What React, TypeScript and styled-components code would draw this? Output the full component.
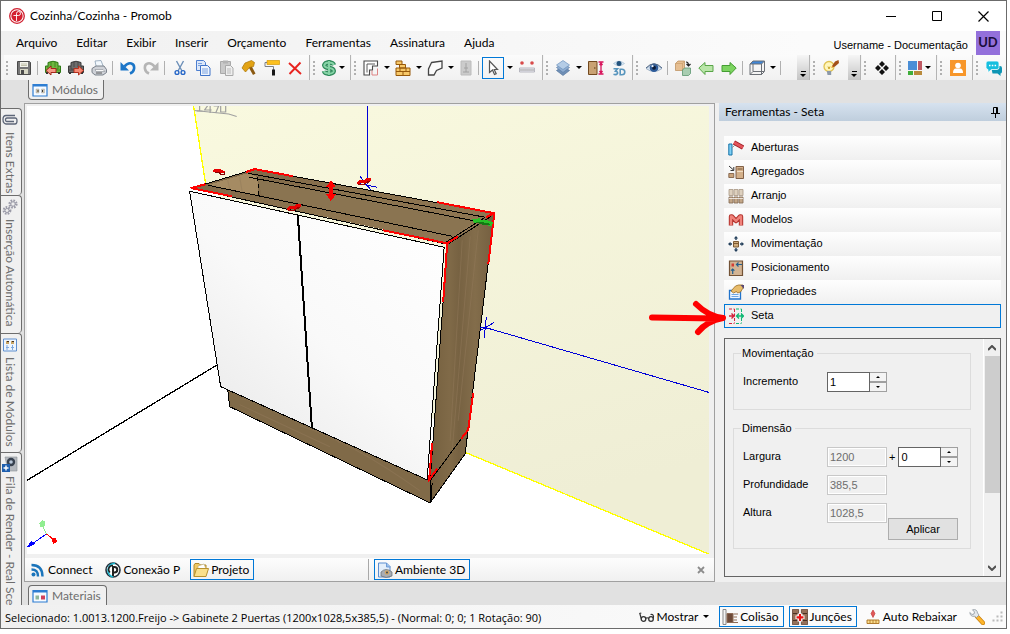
import React from "react";
import styled, { createGlobalStyle, css } from "styled-components";

const Global = createGlobalStyle`
  *, *::before, *::after { box-sizing: border-box; }
  body { margin: 0; background: #fff; }
  button, input { font: inherit; color: inherit; }
`;

const ui = `"Segoe UI", Lato, "Open Sans", sans-serif`;
const sans = `"Liberation Sans", Arial, sans-serif`;

/* ---------- icons ---------- */

const Icon = styled.svg.attrs({ viewBox: "0 0 16 16", "aria-hidden": true })`
  width: 16px;
  height: 16px;
  flex: none;
  display: block;
`;

const sofa = (body: string, dark: string, arrow: React.ReactNode) => (
  <>
    <path d="M3 2.5Q8 0 13 2.500V6h2.500v6.500H.5V6H3Z" fill={body} stroke={dark} />
    <path d="M3 6v3h10V6M6 2v5M10 2v5M.5 10h15" stroke={dark} fill="none" strokeWidth=".7" />
    <path d="M2 12v2M14 12v2" stroke="#333" strokeWidth="2" />
    {arrow}
  </>
);

const icons: Record<string, React.ReactNode> = {
  save: (
    <>
      <path d="M1.500 1.500h12l1 1v12h-13Z" fill="#767676" stroke="#4a4a4a" />
      <path d="M4 2h8v5H4Z" fill="#f4f4ec" />
      <path d="M5 4h6M5 5.500h6" stroke="#b4b49a" strokeWidth=".8" />
      <path d="M4 9h8v5H4Z" fill="#d6d6c4" />
      <path d="M5 10h3v4H5Z" fill="#4a4a4a" />
    </>
  ),
  sofaIn: sofa("#6fb73f", "#2f7a17", <path d="m1 10.500 5-4.500v2.500h5v4H6V15Z" fill="#f39a88" stroke="#a5271b" />),
  sofaOut: sofa("#6d6d6d", "#3b3b3b", <path d="m15.500 10.500-5-4.500v2.500H6v4h4.500V15Z" fill="#f58a74" stroke="#b3301f" />),
  printer: (
    <>
      <path d="m4 1 6-.5 2.500 6.500-7 1Z" fill="#f2f8fd" stroke="#8aa0b4" strokeWidth=".8" />
      <path d="M1 8.500 5 6h8l2.500 3.500v3L12 15H4l-3-2.500Z" fill="#cfd2d8" stroke="#6e7680" strokeWidth=".9" />
      <path d="M4 9.500h8l2 2H5Z" fill="#f9f9f9" stroke="#8a8f96" strokeWidth=".6" />
      <path d="M5 13h6" stroke="#5b5b5b" />
    </>
  ),
  undo: (
    <>
      <path d="M4.500 6.500C9 1 15 3 14 9q-.5 3-4 4.500" fill="none" stroke="#1c76c8" strokeWidth="2.600" />
      <path d="M.5 2v8.500H9Z" fill="#1c76c8" />
    </>
  ),
  redo: (
    <>
      <path d="M11.500 6.500C7 1 1 3 2 9q.5 3 4 4.500" fill="none" stroke="#b5b5b5" strokeWidth="2.600" />
      <path d="M15.500 2v8.500H7Z" fill="#b5b5b5" />
    </>
  ),
  cut: (
    <>
      <path d="m4.500 1 5.500 10M11.500 1 6 11" stroke="#6c8fb8" strokeWidth="1.400" fill="none" />
      <circle cx="5" cy="12.500" r="1.900" fill="none" stroke="#2767c8" strokeWidth="1.400" />
      <circle cx="11" cy="12.500" r="1.900" fill="none" stroke="#2767c8" strokeWidth="1.400" />
    </>
  ),
  copy: (
    <>
      <path d="M1.500.5h7l2 2v8h-9Z" fill="#dce8fa" stroke="#4d7fd0" />
      <path d="M5.500 5.500h7l2.500 2.500v7.500H5.500Z" fill="#eef4fd" stroke="#3f73c8" />
      <path d="M3 3.500h4M3 5.500h2M7 9h6M7 11h6M7 13h6" stroke="#7ba2e0" />
    </>
  ),
  paste: (
    <>
      <path d="M2.500 1.500h10v12h-10Z" fill="#c9c9c9" stroke="#a9a9a9" />
      <path d="M5 .5h5v3H5Z" fill="#b3b3b3" />
      <path d="M7.500 5.500h5l2.500 2.500v7.500H7.500Z" fill="#eee" stroke="#a9a9a9" />
      <path d="M9 9h4M9 11h4M9 13h4" stroke="#bbb" />
    </>
  ),
  hammer: (
    <>
      <path d="m7.500 7 4.500 8 2.500-1.500L10.500 6Z" fill="#8b5a12" />
      <path d="m1 8 3-5 6.500-2.500 3 2-1 4-4 1-4 4.500Z" fill="#e2a315" stroke="#a87208" strokeWidth=".7" />
    </>
  ),
  roller: (
    <>
      <path d="M3 .5h12.500v4H3Z" fill="#fcc01e" stroke="#d69a06" strokeWidth=".7" />
      <path d="M3 2.500H1v4h8.500V10" fill="none" stroke="#7c8086" />
      <path d="M8 9.500h3v6H8Z" fill="#181818" />
    </>
  ),
  del: <path d="m2 3 12 11M13.500 2.500 2.500 14" stroke="#e8231f" strokeWidth="1.900" fill="none" />,
  dollar: (
    <>
      <path d="M8 0v16" stroke="#2f8a5b" strokeWidth="3" />
      <path d="M13 5Q12 2.500 8 2.500T3.200 5.200Q3.500 7.500 8 8t4.800 3Q12.500 13.500 8 13.500T3 11" fill="none" stroke="#2f8a5b" strokeWidth="4.400" />
      <path d="M13 5Q12 2.500 8 2.500T3.200 5.200Q3.500 7.500 8 8t4.800 3Q12.500 13.500 8 13.500T3 11M8 1v14" fill="none" stroke="#86d3a6" strokeWidth="2" />
    </>
  ),
  plan: (
    <>
      <path d="M1 1h13.500v5H9.500v4H6.500v5H1Z" fill="#fff" stroke="#4a4a4a" strokeWidth="1.100" />
      <path d="M4 12.500V4h8" fill="none" stroke="#4a4a4a" strokeWidth=".9" />
      <path d="M9 15H14.500V8.500M9 10.500V15" fill="none" stroke="#dd8484" />
    </>
  ),
  bricks: (
    <>
      <path d="M1 1h6v3.500H1ZM4.500 4.500h6V8h-6ZM1 8h14v7.500H1Z" fill="#f7c868" stroke="#96580a" />
      <path d="M1 11.500h14M5 8v3.500M11 8v3.500M8 11.500V15" stroke="#96580a" />
    </>
  ),
  shape: <path d="M4.500 2.500 15 1v7l-5.500 2.500L7 15H1.500V9Z" fill="#fafafa" stroke="#454545" strokeWidth="1.300" />,
  cabinetOff: (
    <>
      <path d="M3 1h10v14H3Z" fill="#cbcbcb" stroke="#bcbcbc" />
      <path d="M8 3v9M6 8h4M5 12h6" stroke="#a2a2a2" />
    </>
  ),
  cursor: <path d="M4.500 1v11.500l3-2.500 2 4.500 1.700-.8-2-4.200h3.300Z" fill="#fff" stroke="#555" strokeWidth="1.200" />,
  measure: (
    <>
      <circle cx="3" cy="3" r="1.800" fill="#d84a4a" />
      <circle cx="13" cy="3" r="1.800" fill="#d84a4a" />
      <path d="M.5 8h15v4H.5Z" fill="#ececf2" stroke="#a9a9b4" strokeWidth=".8" />
      <path d="M2 9v2m2-2v2m2-2v2m2-2v2m2-2v2m2-2v2m2-2v2" stroke="#888" strokeWidth=".8" />
    </>
  ),
  layers: (
    <>
      <path d="m8 6 6.500 4.500L8 15.500 1.500 10.500Z" fill="#6f8fb5" stroke="#55779f" strokeWidth=".7" />
      <path d="m8 3 6.500 4.500L8 12.500 1.500 7.500Z" fill="#8eacd0" stroke="#5c80aa" strokeWidth=".7" />
      <path d="M8 .5 14.500 5 8 9.500 1.500 5Z" fill="#b4cce6" stroke="#6d92bd" strokeWidth=".7" />
    </>
  ),
  door: (
    <>
      <path d="M.5 1.500h8.500v13H.5Z" fill="#c9a273" stroke="#72491f" />
      <path d="M6 8h1.500" stroke="#5a3510" />
      <path d="M10.500 2h5M10.500 14h5M13 3v10M11.500 5 13 3l1.500 2M11.500 11l1.500 2 1.500-2" stroke="#d8145c" strokeWidth="1.300" fill="none" />
    </>
  ),
  eye3d: (
    <>
      <path d="M2.500 3.500Q8-1 13.500 3.500 8 8 2.500 3.500Z" fill="#dceaf5" stroke="#a4bdd2" strokeWidth=".7" />
      <circle cx="8" cy="3.500" r="2.500" fill="#23537d" />
      <path d="M2.500 8.800h4l-2 2.400q2.500.3 2 2.300-1.300 1.800-4 .8M9.200 9.200v5.600h1.600q3 0 3-2.800t-3-2.800Z" fill="none" stroke="#5795bd" strokeWidth="1.600" />
    </>
  ),
  eye: (
    <>
      <path d="M0 8.500Q8 1 16 8.500 8 14.500 0 8.500Z" fill="#d8e4f0" stroke="#8fa5bd" strokeWidth=".8" />
      <circle cx="8" cy="7.800" r="4.300" fill="#2e5c9a" />
      <circle cx="8" cy="7.800" r="2" fill="#0c1c38" />
      <circle cx="6.500" cy="6.200" r="1.100" fill="#eef6ff" />
      <path d="M0 8Q8-.5 16 8" fill="none" stroke="#4f6684" />
    </>
  ),
  boxes: (
    <>
      <path d="M.5 3.500 3 1h6.500v7L7.500 10.500h-7Z" fill="#e6bf92" stroke="#b98b57" strokeWidth=".7" />
      <path d="M.5 3.500h7v7M7.500 3.500 9.500 1" fill="none" stroke="#c99d6b" strokeWidth=".7" />
      <path d="M7.500 10 9.500 8h6v5.500l-2 2h-6Z" fill="#a8cdb1" stroke="#5c9670" strokeWidth=".8" />
      <path d="M11 2q2.500 0 2.500 3.500m-2-1.500 2 2 2-2" fill="none" stroke="#222" strokeWidth="1.200" />
    </>
  ),
  arrowL: <path d="M.8 8 7 2.500v3h8v6H7v3Z" fill="#b9e6a8" stroke="#59a548" />,
  arrowR: <path d="M15.200 8 9 2.500v3H1v6h8v3Z" fill="#7cd460" stroke="#459d33" />,
  cube: (
    <>
      <path d="m1 4 3-3h11.500l-3 3Z" fill="#3f86d8" />
      <path d="m1 4 3-3h11.500v10.500l-3 3H1ZM1 4h11.500V15M15.500 1l-3 3M4 4v7.500h11M4 11.500l-3 3" fill="none" stroke="#6c7076" />
    </>
  ),
  bulb: (
    <>
      <circle cx="6" cy="6.500" r="5" fill="#fff6bc" stroke="#e0c252" strokeWidth="1.300" />
      <path d="M5 6.500 6 9l1-2.500" fill="none" stroke="#c9a227" />
      <path d="M3.800 11h4.400v4H4.500Z" fill="#8d99a8" />
      <path d="m9 6 3-4.500L15.500 0l.5 3-4 3.500-3 1Z" fill="#a3501a" />
      <path d="m8 8 1-2 1.500 1Z" fill="#f4a22a" />
    </>
  ),
  diamonds: <path d="m8 1 3 3-3 3-3-3Zm0 8 3 3-3 3-3-3ZM4 5l3 3-3 3-3-3Zm8 0 3 3-3 3-3-3Z" fill="#111" />,
  blocks: (
    <>
      <path d="M1 1h9v9H1Z" fill="#4a8ed6" />
      <path d="M11 1h4v9h-4Z" fill="#bf5a64" />
      <path d="M1 11h5v4H1Z" fill="#3fae3a" />
      <path d="M7 11h8v4H7Z" fill="#b98a3c" />
    </>
  ),
  person: (
    <>
      <path d="M0 0h16v16H0Z" fill="#f7962a" />
      <circle cx="8" cy="5.500" r="2.800" fill="#fff" />
      <path d="M3 13q0-4.500 3-4.500h4q3 0 3 4.500Z" fill="#fff" />
    </>
  ),
  chat: (
    <>
      <path d="M5 6h9q2 0 2 2v3.500q0 2-1.500 2V16L11.500 13.500H6.500Z" fill="#0e95b4" />
      <path d="M2 1h9q2 0 2 2v4.500q0 2-2 2H5.500L2 12.500V9.500q-2 0-2-2V3q0-2 2-2Z" fill="#16bfdf" stroke="#fff" strokeWidth=".8" />
      <path d="M3 5.500h1.500m1.300 0h1.500m1.300 0h1.500" stroke="#fff" strokeWidth="1.500" />
    </>
  ),
  modules: (
    <>
      <path d="M1 2.500h14v11.500H1Z" fill="#f7fbff" stroke="#2d7dd2" strokeWidth="1.200" />
      <path d="M1 2h14v2.500H1Z" fill="#2d7dd2" />
      <path d="M4 7h3v4H4ZM9.500 7h3v4h-3Z" fill="#d9c9a8" stroke="#8ba0b8" strokeWidth=".4" />
      <path d="M6 8v2M10.500 8v2" stroke="#3b3b3b" />
    </>
  ),
  materials: (
    <>
      <path d="M1 2.500h14v11.500H1Z" fill="#f7fbff" stroke="#2d7dd2" strokeWidth="1.200" />
      <path d="M1 2h14v2.500H1Z" fill="#2d7dd2" />
      <path d="M3.500 7.500h3.500v4H3.500Z" fill="#8fb79b" />
      <path d="M9 7.500h4v4H9Z" fill="#d0405a" />
    </>
  ),
  clip: <path d="M13 3.500H4Q1 3.500 1 7.500T4 12h9q2 0 2-3t-2-3H5Q3.500 6 3.500 7.800T5 9.500h7" fill="none" stroke="#5d6678" strokeWidth="1.300" />,
  gears: (
    <>
      <circle cx="11" cy="5" r="3.200" fill="none" stroke="#9b9ba8" strokeWidth="2.800" strokeDasharray="1.500 1" />
      <circle cx="11" cy="5" r="2.200" fill="#eee" stroke="#9b9ba8" />
      <circle cx="5" cy="11.500" r="3" fill="none" stroke="#9b9ba8" strokeWidth="2.800" strokeDasharray="1.500 1" />
      <circle cx="5" cy="11.500" r="2" fill="#eee" stroke="#9b9ba8" />
    </>
  ),
  list: (
    <>
      <path d="M1.500 2h13v12h-13Z" fill="#eef5fd" stroke="#5f8fcf" />
      <path d="M4 4h3v3H4ZM9 4h3v3H9Z" fill="#c9a565" />
      <path d="M5 8v5M10.500 8v5M4 10.500h3M9 10.500h3" stroke="#7fa8de" />
      <path d="M5 4.500h2M10 4.500h2" stroke="#432" />
    </>
  ),
  queue: (
    <>
      <path d="M3 1h12v14H6Z" fill="#b4b8be" stroke="#8b9096" strokeWidth=".6" />
      <circle cx="9" cy="6" r="4.200" fill="#37414f" />
      <circle cx="9" cy="6" r="1.800" fill="#b9c8da" />
      <path d="M0 8h8v8H0Z" fill="#1f5fae" />
      <path d="M4 9.500v5M1.500 12h5" stroke="#fff" strokeWidth="1.400" />
    </>
  ),
  rss: (
    <>
      <circle cx="3.500" cy="12.500" r="2" fill="#1b75bb" />
      <path d="M1.500 7.500q6.500 0 6.500 7M1.500 3q11 0 11 11.500" fill="none" stroke="#1b75bb" strokeWidth="2.400" />
    </>
  ),
  conexao: (
    <>
      <circle cx="8" cy="8" r="7" fill="#fff" stroke="#26323e" strokeWidth="1.600" />
      <path d="M10 1.300A7 7 0 0 0 8 15" fill="none" stroke="#18b4cc" strokeWidth="1.800" />
      <path d="M8 14V5H9.500a2.700 2.700 0 0 1 0 5.500H8" fill="none" stroke="#222" strokeWidth="2" />
      <path d="M8 3.500A4 4 0 0 0 5 10.500" fill="none" stroke="#222" strokeWidth="1.500" />
    </>
  ),
  folder: (
    <>
      <path d="M1 14.500V3l1-1.500h4L7.500 3H13v3" fill="#f1c863" stroke="#b28a2d" />
      <path d="m5 4 6-2 2 5-8 1Z" fill="#fff" stroke="#b7a777" strokeWidth=".6" />
      <path d="m1 14.500 2.500-8H15.500l-2.500 8Z" fill="#fbe08b" stroke="#b8912f" />
    </>
  ),
  ambient: (
    <>
      <path d="M1.500 1h8l3.500 3.500V15h-11.500Z" fill="#e3eefa" stroke="#5c8ed0" />
      <path d="M9.500 1v4h4" fill="#9cc0ea" stroke="#5c8ed0" strokeWidth=".8" />
      <path d="M4 10q5-5 11 0v4q-6 3-11 0Z" fill="#a8adb5" stroke="#63686f" strokeWidth=".7" />
      <circle cx="10" cy="10.500" r="2.300" fill="#d3a864" />
      <circle cx="10" cy="10.500" r="1" fill="#3f4650" />
    </>
  ),
  glasses: (
    <>
      <circle cx="4.500" cy="10" r="2.300" fill="none" stroke="#333" strokeWidth="1.300" />
      <circle cx="12" cy="10" r="2.300" fill="none" stroke="#333" strokeWidth="1.300" />
      <path d="M6.800 9.500Q8 8 9.700 9.500M2.200 9.500.8 4.500l1.500-.5M14.200 9.500Q15.500 5 11.500 5.500" fill="none" stroke="#333" strokeWidth="1.200" />
    </>
  ),
  collision: (
    <>
      <path d="M1 .5h3v15H1Z" fill="#f4f4f4" stroke="#888" />
      <path d="M5 4.500h6v9H5Z" fill="#6d4a39" stroke="#8f6c56" />
      <path d="M11.500 5H16M11.500 8H15M11.500 11H15M8 13.500h8" stroke="#8f6c56" strokeWidth="1.200" />
    </>
  ),
  junction: (
    <>
      <path d="M.4.4h6.200v15.200H.4ZM9.400.4h6.200v15.200H9.400Z" fill="#957059" stroke="#5a3d2d" strokeWidth=".8" />
      <path d="M1 4.500h5M1 11.500h5M10 4.500h5M10 11.500h5" stroke="#4a3022" />
      <path d="M5.500 4.500h5v2h2v3.500h-2v2.500h-5V10h-2V6.500h2Z" fill="#fff" />
      <path d="M8 5v7M4.500 8.300h7" stroke="#e81313" strokeWidth="2.200" />
    </>
  ),
  lower: (
    <>
      <path d="m8 1 2 3.500-2 4-2-4Z" fill="#e05858" stroke="#bd2c2c" strokeWidth=".6" />
      <path d="M2 11h12v3.500H2Z" fill="#f9dc8c" stroke="#a9711e" strokeWidth=".9" />
      <path d="M5 11v3M8 11v3M11 11v3" stroke="#a9711e" strokeWidth=".8" />
    </>
  ),
  wrench: (
    <>
      <path d="m8 7.500 6 6.500" stroke="#c77f10" strokeWidth="4.400" strokeLinecap="round" />
      <path d="m8 7.500 6 6.500" stroke="#fdb52c" strokeWidth="3" strokeLinecap="round" />
      <path d="M.8 3.500 3 5.500l2-.5.500-2L3.500.8Q8-.3 8.500 4l1.500 2-2.500 2.500-2-1.200Q1.500 8 .8 3.500Z" fill="#e4e8ec" stroke="#8e979f" strokeWidth=".8" />
    </>
  ),
  openings: (
    <>
      <path d="M.8 4h3.200v11H.8Z" fill="#7fd0f5" stroke="#1472a8" />
      <path d="m6 2.500 9 5" stroke="#9f1c24" strokeWidth="4.400" />
      <path d="m6 2.500 9 5" stroke="#e2555b" strokeWidth="2.800" />
      <path d="m4 8 3-3" stroke="#999" />
    </>
  ),
  aggregate: (
    <>
      <path d="M1 2l4.500 4M5.800 3v3.500H2.500" fill="none" stroke="#333" />
      <path d="M.8 9.500h5v4h-5Z" fill="#c9a37b" stroke="#76543a" strokeWidth=".8" />
      <path d="M8 2.500h7.500v12H8Z" fill="#d3b08a" stroke="#76543a" strokeWidth=".9" />
      <path d="M9.500 5h5" stroke="#7b5a3d" />
      <path d="M9 7.500h6" stroke="#f0ddc4" />
    </>
  ),
  array: (
    <>
      <path d="M1 1.500h4v6H1ZM6 1.500h4v6H6ZM11 1.500h4v6h-4Z" fill="#ddd0be" stroke="#a89784" strokeWidth=".8" />
      <path d="M1 9h4v6H1ZM6 9h4v6H6ZM11 9h4v6h-4Z" fill="#c3a788" stroke="#806850" strokeWidth=".8" />
      <path d="M1 10.500h14" stroke="#fff" strokeWidth=".7" />
    </>
  ),
  models: (
    <>
      <path d="M3 13.500V4.500h1L8 9l4-4.500h1v9" fill="none" stroke="#b3322c" strokeWidth="4.400" strokeLinejoin="round" />
      <path d="M3 13V4.500h1L8 9l4-4.500h1V13" fill="none" stroke="#f0837b" strokeWidth="2.400" strokeLinejoin="round" />
    </>
  ),
  move: (
    <>
      <path d="M5.500 5.500h5v5.500h-5Z" fill="#d0ac7c" stroke="#7d5a33" />
      <path d="M5.500 7.500h5" stroke="#7d5a33" />
      <path d="m8 0 2.200 2.500H8.700V4H7.300V2.500H5.800ZM8 16l2.200-2.500H8.700V12H7.300v1.500H5.800ZM0 8l2.500-2.200v1.500H4v1.400H2.500v1.500ZM16 8l-2.500-2.200v1.500H12v1.400h1.500v1.500Z" fill="#24405c" />
    </>
  ),
  position: (
    <>
      <path d="M1.500 1h13v14.500h-13Z" fill="#d2b494" stroke="#725236" strokeWidth="1.200" />
      <path d="M3.500 3.500h2.500v3H3.500Z" fill="#d43e34" />
      <path d="M14 4.500H8.500M10.500 2.500l-2 2 2 2M4.700 14V9M3 10.700 4.700 9l1.700 1.700" fill="none" stroke="#23608e" strokeWidth="1.200" />
    </>
  ),
  properties: (
    <>
      <path d="M1.500 6.500h11v8.500h-11Z" fill="#eef6ff" stroke="#2073cc" strokeWidth="1.300" />
      <path d="M3.500 10.500h7M3.500 12.500h7" stroke="#6ea7e4" />
      <path d="M3 7 7.500 2l3-1H15v3l-2.500 4-3 1-1-1.500-3 1.500Z" fill="#e8bc6b" stroke="#9b6c22" strokeWidth=".8" />
      <path d="M12.500 1H16v4Z" fill="#5b4a76" />
    </>
  ),
  seta: (
    <>
      <path d="M1 1h5.500M6.500 1v14M1 15.500h5.500" fill="none" stroke="#d4233c" strokeDasharray="3 1.500" />
      <path d="M1 8h5M3.500 5.500 6 8l-2.500 2.500" fill="none" stroke="#d4233c" strokeWidth="1.400" />
      <path d="M8 1h5.500M13.500 1v14M8 15.500h5.500" fill="none" stroke="#10b873" strokeDasharray="3 1.500" />
      <path d="M8.500 8h7M11 5.500 8.500 8l2.500 2.500M13 5.500 15.500 8 13 10.500" fill="none" stroke="#10b873" strokeWidth="1.300" />
    </>
  ),
};

/* ---------- window frame ---------- */

const Desktop = styled.div`
  min-height: 100vh;
  padding: 0 3px 5px 0;
  display: flex;
`;

const Window = styled.div`
  flex: 1;
  min-width: 0;
  display: flex;
  flex-direction: column;
  border: 1px solid #6b6b6b;
  background: #e1e1e1;
  font: 12px/16px ${ui};
  color: #000;
`;

const TitleBar = styled.header`
  height: 30px;
  background: #fff;
  display: flex;
  align-items: center;
  padding-left: 8px;
`;

const Title = styled.h1`
  margin: 0 auto 0 5px;
  font: inherit;
`;

const Caption = styled.button`
  width: 46px;
  height: 30px;
  padding: 0;
  border: 0;
  background: none;
  display: grid;
  place-items: center;
`;

const MenuRow = styled.div`
  height: 24px;
  display: flex;
  align-items: center;
  justify-content: space-between;
  padding: 0 6px 0 5px;
  background: linear-gradient(90deg, #f0f0f0, #fbfbfb 80%);
`;

const MenuBar = styled.nav`
  display: flex;
`;

const MenuItem = styled.button`
  border: 0;
  background: none;
  padding: 4px 9px 4px 10px;
  white-space: nowrap;
`;

const User = styled.div`
  display: flex;
  align-items: center;
  gap: 8px;
  height: 24px;
  font: 11px/14px ${sans};
  span { padding-top: 4px; }
`;

const Avatar = styled.div`
  width: 24px;
  height: 24px;
  background: #9370db;
  color: #1a0d3c;
  font: bold 13px/23px ${ui};
  text-align: center;
`;

const ToolRow = styled.div`
  height: 25px;
  display: flex;
  gap: 2px;
  padding-left: 3px;
  background: #f4f4f4;
`;

const Strip = styled.div<{ $w: number }>`
  flex: 0 0 ${(p) => p.$w}px;
  display: flex;
  align-items: center;
  background: linear-gradient(#fbfbfb, #f1f1f1);
  box-shadow: 1px 0 #b4b4b4;
  &:last-child { flex-grow: 1; box-shadow: none; }
`;

const Grip = styled.span`
  flex: none;
  width: 2px;
  height: 14px;
  margin: 0 4px 0 2px;
  background: repeating-linear-gradient(#b0b0b0 0 2px, transparent 2px 4px);
`;

type Kind = "plain" | "slim" | "caret" | "menu" | "split";
const toolWidth: Record<Kind, number> = { plain: 23, slim: 20, caret: 11, menu: 28, split: 32 };

const ToolButton = styled.button<{ $kind: Kind; $active?: boolean }>`
  flex: none;
  width: ${(p) => toolWidth[p.$kind]}px;
  height: 22px;
  padding: 0;
  border: 0;
  background: none;
  display: flex;
  align-items: center;
  justify-content: center;
  ${(p) => p.$kind === "split" && css`gap: 5px;`}
  ${(p) => p.$kind === "menu" && css`gap: 2px;`}
  ${(p) => p.$active && css`width: 22px; border: 1px solid #0078d7;`}
`;

const Caret = styled.span`
  width: 0;
  border: 3px solid transparent;
  border-top-color: #000;
  border-bottom: 0;
`;

const Divider = styled.span`
  flex: none;
  width: 1px;
  height: 14px;
  margin: 0 3px 0 2px;
  background: #b0b0b0;
`;

const Overflow = styled.button`
  width: 12px;
  height: 25px;
  margin-left: auto;
  padding: 0 0 3px;
  border: 0;
  background: linear-gradient(#f6f6f6, #c4c4c4);
  display: flex;
  flex-direction: column;
  align-items: center;
  justify-content: flex-end;
  gap: 2px;
  &::before { content: ""; width: 5px; height: 1px; background: #000; }
`;

/* ---------- workspace ---------- */

const Workspace = styled.div`
  flex: 1;
  display: flex;
  min-height: 0;
`;

const Rail = styled.aside`
  flex: 0 0 21px;
  margin-right: 2px;
  padding-top: 28px;
  height: 525px;
  overflow: hidden;
`;

const RailTab = styled.button<{ $h: number }>`
  width: 21px;
  height: ${(p) => p.$h}px;
  padding: 3px 2px 0 0;
  border: 1px solid #6d6d6d;
  border-left: 0;
  border-bottom: 0;
  border-radius: 0 4px 4px 0;
  background: #f0f0f0;
  color: #6d6d6d;
  display: flex;
  flex-direction: column;
  align-items: center;
  gap: 4px;
  span { writing-mode: vertical-rl; white-space: nowrap; flex: none; }
`;

const Docks = styled.div`
  flex: 1;
  min-width: 0;
  display: flex;
  flex-direction: column;
`;

const Band = styled.div<{ $h: number; $end?: boolean }>`
  height: ${(p) => p.$h}px;
  padding-left: 4px;
  display: flex;
  align-items: ${(p) => (p.$end ? "flex-end" : "flex-start")};
`;

const DockTab = styled.button<{ $up?: boolean }>`
  height: 20px;
  padding: 0 5px 0 3px;
  display: flex;
  align-items: center;
  gap: 4px;
  background: #f0f0f0;
  color: #6d6d6d;
  border: 1px solid #6d6d6d;
  ${(p) => (p.$up ? css`border-bottom: 0; border-radius: 4px 4px 0 0;` : css`border-top: 0; border-radius: 0 0 4px 4px;`)}
`;

const Main = styled.div`
  flex: 1;
  display: flex;
  background: #f0f0f0;
`;

const Viewport = styled.section`
  flex: 1;
  min-width: 0;
  border: 1px solid #a0a0a0;
  display: flex;
  flex-direction: column;
`;

const Scene = styled.svg`
  display: block;
  flex: 1;
  min-height: 0;
  height: 447px;
  margin: 2px 5px 4px 2px;
  background: #fff;
`;

const ViewTabs = styled.div`
  height: 23px;
  display: flex;
  align-items: center;
  padding: 0 0 0 2px;
  background: linear-gradient(#fdfdfd, #f0f0f0);
`;

const TabGroup = styled.div<{ $grow?: boolean }>`
  display: flex;
  align-items: center;
  gap: 5px;
  ${(p) => (p.$grow ? css`flex: 1; padding-left: 5px;` : css`flex: 0 0 342px; border-right: 1px solid #a8a8a8; height: 21px;`)}
`;

const TextButton = styled.button<{ $on?: boolean }>`
  flex: none;
  height: 21px;
  padding: 0 4px 0 2px;
  border: 1px solid ${(p) => (p.$on ? "#0078d7" : "transparent")};
  background: none;
  display: flex;
  align-items: center;
  gap: 2px;
  white-space: nowrap;
`;

const CloseTab = styled.button`
  margin: 0 8px 0 auto;
  padding: 0;
  width: 10px;
  height: 10px;
  border: 0;
  background: none;
  display: grid;
  place-items: center;
`;

/* ---------- tools panel ---------- */

const Panel = styled.aside`
  flex: 0 0 287px;
  margin-left: 4px;
`;

const PanelHead = styled.div`
  height: 18px;
  padding: 0 6px;
  display: flex;
  align-items: center;
  justify-content: space-between;
  background: linear-gradient(#d6e2ef, #bfcedd);
  h2 { margin: 0; font: inherit; }
`;

const ToolList = styled.ul`
  list-style: none;
  margin: 15px 5px 10px;
  padding: 0;
  font: 11px/14px ${sans};
  li { position: relative; }
`;

const ToolItem = styled.button<{ $on?: boolean }>`
  width: 100%;
  height: 24px;
  padding: 0 3px;
  border: 1px solid ${(p) => (p.$on ? "#0078d7" : "transparent")};
  background: ${(p) => (p.$on ? "#f0f0f0" : "linear-gradient(#fefefe, #f0f0f0) border-box")};
  display: flex;
  align-items: center;
  gap: 7px;
  text-align: left;
  span { padding-bottom: 2px; }
`;

const Pointer = styled.svg`
  position: absolute;
  right: 100%;
  top: -6px;
  width: 80px;
  height: 40px;
  margin-right: -3px;
`;

const PropBox = styled.form`
  margin: 0 5px;
  height: 239px;
  border: 1px solid #646464;
  display: flex;
  font: 11px/14px ${sans};
`;

const Groups = styled.div`
  flex: 1;
  padding: 7px 12px 0 8px;
`;

const Group = styled.fieldset<{ $h: number }>`
  margin: 0 0 11px;
  height: ${(p) => p.$h}px;
  padding: 12px 12px 0 9px;
  min-width: 0;
  border: 1px solid #dcdcdc;
  display: grid;
  grid-template-columns: 84px 60px 60px;
  grid-template-rows: 20px 20px 20px 9px;
  gap: 8px 0;
  align-content: start;
  legend { padding: 0 3px 0 1px; margin-left: -2px; }
  label { line-height: 18px; }
`;

const Field = styled.input`
  width: 60px;
  height: 20px;
  padding: 1px 2px;
  border: 1px solid #c8c8c8;
  border-radius: 0;
  background: #f0f0f0;
  color: #6d6d6d;
  box-shadow: inset 0 0 0 1px #fff;
`;

const SpinBox = styled.div`
  width: 60px;
  height: 20px;
  display: grid;
  grid-template: 1fr 1fr / 43px 17px;
  input {
    grid-row: span 2;
    min-width: 0;
    border: 1px solid #646464;
    padding: 1px 2px;
    background: #fff;
  }
  button {
    padding: 0;
    border: 1px solid #a0a0a0;
    border-left: 0;
    background: #f4f4f4;
    display: grid;
    place-items: center;
  }
  i { border: 2px solid transparent; border-top: 0; border-bottom-color: #000; }
  button:last-child i { transform: rotate(180deg); }
`;

const Plus = styled.div`
  display: flex;
  align-items: center;
  width: 71px;
  gap: 3px;
  padding-left: 2px;
`;

const Apply = styled.button`
  grid-column: 3;
  grid-row: 3 / span 2;
  align-self: end;
  width: 70px;
  height: 22px;
  margin-left: 1px;
  padding: 0;
  border: 1px solid #adadad;
  background: #e1e1e1;
`;

const ScrollBar = styled.div`
  width: 17px;
  border-left: 1px solid #fff;
  display: flex;
  flex-direction: column;
  align-items: center;
  justify-content: space-between;
  svg { margin: 6px 0 5px; }
`;

const Thumb = styled.div`
  width: 15px;
  height: 137px;
  margin-bottom: auto;
  background: #cdcdcd;
`;

/* ---------- status bar ---------- */

const Status = styled.footer`
  height: 23px;
  padding: 0 3px 0 4px;
  display: flex;
  align-items: center;
  background: linear-gradient(90deg, #f0f0f0, #fbfbfb 80%);
`;

const Selected = styled.span`
  margin-right: auto;
  padding-top: 2px;
  font: 11px/16px "Open Sans", "Noto Sans", sans-serif;
  white-space: nowrap;
`;

const StatusActions = styled.div`
  display: flex;
  align-items: center;
  gap: 5px;
`;

/* ---------- pieces ---------- */

type ToolProps = { icon: string; label: string; kind?: Kind; active?: boolean };
const Tool = ({ icon, label, kind = "plain", active }: ToolProps) => (
  <ToolButton type="button" aria-label={label} $kind={kind} $active={active}>
    <Icon>{icons[icon]}</Icon>
    {(kind === "split" || kind === "menu") && <Caret />}
  </ToolButton>
);

const Spin = ({ id, value, label }: { id: string; value: string; label?: string }) => (
  <SpinBox>
    <input id={id} defaultValue={value} aria-label={label} />
    <button type="button" aria-label="Aumentar"><i /></button>
    <button type="button" aria-label="Diminuir"><i /></button>
  </SpinBox>
);

const RedHandle = ({ x, y }: { x: number; y: number }) => (
  <g transform={`translate(${x} ${y})`}>
    <path d="M-7 1-4-1H0L2-3H7V0H3L1 2H-3L-7 3Z" fill="#e80000" />
    <path d="M-6 3H-3L1 2 3 0H6V1L4 2H2L1 4H-6Z" fill="#980000" />
  </g>
);

const Cabinet = () => (
  <Scene viewBox="27 106 682 447" preserveAspectRatio="xMidYMid slice" role="img" aria-label="Ambiente 3D" fill="none" shapeRendering="crispEdges">
    <defs>
      <linearGradient id="wall" x1="0" y1="0" x2=".3" y2="1">
        <stop offset="0" stopColor="#f9f9df" />
        <stop offset="1" stopColor="#efeed5" />
      </linearGradient>
      <linearGradient id="front" x1=".9" y1="0" x2=".1" y2="1">
        <stop offset="0" stopColor="#fff" />
        <stop offset=".5" stopColor="#f9f9f9" />
        <stop offset="1" stopColor="#e6e6e6" />
      </linearGradient>
      <linearGradient id="side" x1="0" y1="0" x2="1" y2="0">
        <stop offset="0" stopColor="#75603f" />
        <stop offset=".3" stopColor="#806a48" />
        <stop offset=".45" stopColor="#776242" />
        <stop offset=".7" stopColor="#836d4b" />
        <stop offset="1" stopColor="#745f40" />
      </linearGradient>
      <linearGradient id="top" x1="0" y1="0" x2="1" y2="1">
        <stop offset="0" stopColor="#7d6646" />
        <stop offset=".5" stopColor="#8c7450" />
        <stop offset="1" stopColor="#907753" />
      </linearGradient>
    </defs>
    <path d="M193 106H709V553L466 452 206 183Z" fill="url(#wall)" />
    <path d="M194 106 206 184M466 452 708 553" stroke="#ff0" strokeWidth="1.300" />
    <g stroke="#a0a0a0" shapeRendering="auto">
      <path d="M195 110.500 229 114 237 116.500" />
      <path d="M200 105V111M197 111H203M208.500 105 205 110H212M210.500 105V113M214 106H219L216 113M221 105V112H226V105" strokeWidth="1.200" />
    </g>
    <path d="M27 480 218 364" stroke="#000" strokeWidth="1.300" />

    <path d="M192 188 255 169 494 213 447 243Z" fill="url(#top)" />
    <path d="M208 185 248 173 258 177 259 196Z" fill="#a58b63" />
    <path d="M258 178 475 220 452 236 262 195Z" fill="#8a7451" />
    <path d="M447 243 494 213 468 430 465 453 430 502 430 479Z" fill="url(#side)" />
    <path d="M228 389 430 480V502L230 406Z" fill="#806a48" />
    <g stroke="#92795a" opacity=".5" shapeRendering="auto">
      <path d="M240 398Q290 405 340 442M300 425Q350 440 420 490M240 404 330 446" />
      <path d="M462 240 450 440M478 230 458 420M470 236 452 450" />
      <path d="M216 184 220 191M228 180 231 193M240 177 243 195" />
    </g>
    <path d="M190 191 444 247 427 479 221 386Z" fill="url(#front)" />

    <g stroke="#000">
      <path d="M192 188 255 169 494 213M192 188 447 244M190 191 444 247" />
      <path d="M248 173 485 217M249 177 476 221M208 185 452 236" />
      <path d="M258 177 259 196" strokeDasharray="4 3" />
      <path d="M444 243 485 217M449 243 491 216M190 191 221 386 427 479M444 247 427 479M447 245 430 480" />
      <path d="M494 213 467 436 465 453 430 502 230 406 228 389M430 480V502M432 482 431 500M430 480 467 430" />
      <path d="M298 215 312 427" strokeWidth="2" />
    </g>
    <g stroke="#f00" strokeWidth="2">
      <path d="M191 188 206 184M192 188 232 196M246 172 255 169 293 176M437 202 494 213 488 264M383 230 447 243 458 236M486 217 494 213" />
      <path d="M447 243 443 302M432 442 429 479 437 468M473 392 468 429 461 438" />
    </g>

    <g stroke="#0000d8">
      <path d="M367.500 106V184M357 183 377 187M360 176 371 190" />
      <path d="M485 327 709 392M480 330 494 322M486 317 484 337M480 327 490 328" />
    </g>
    <path d="M213 170 215 169H220L225 171V173H219L216 172H213Z" fill="#e80000" />
    <path d="M215 172H219L221 174H225V172" stroke="#800000" />
    <RedHandle x={364} y={181} />
    <RedHandle x={294} y={207} />
    <path d="M331 180 336 187H333V194H336L331 201 326 194H329V187H326Z" fill="#f00" />
    <path d="M472 219 480 218V220H487L493 222 491 226 482 224 473 222Z" fill="#28c028" />
    <path d="M475 222 482 222 492 224 484 225Z" fill="#147814" />

    <path d="M47 533 43 524" stroke="#90ee90" />
    <path d="M40 522 43 519 46 521 45 526H41Z" fill="#90ee90" />
    <path d="M47 533 55 539" stroke="#f00" />
    <path d="M52 537H56L58 541 54 543Z" fill="#f00" />
    <path d="M47 533 30 545" stroke="#00f" />
    <path d="M27 547 32 540 36 543Z" fill="#00f" />
  </Scene>
);

const tools: [string, string][] = [
  ["openings", "Aberturas"],
  ["aggregate", "Agregados"],
  ["array", "Arranjo"],
  ["models", "Modelos"],
  ["move", "Movimentação"],
  ["position", "Posicionamento"],
  ["properties", "Propriedades"],
  ["seta", "Seta"],
];

const menus = ["Arquivo", "Editar", "Exibir", "Inserir", "Orçamento", "Ferramentas", "Assinatura", "Ajuda"];

export default function App() {
  return (
    <>
      <Global />
      <Desktop>
        <Window>
          <TitleBar>
            <Icon>
              <circle cx="8" cy="8" r="7.300" fill="#fff" stroke="#d02030" strokeWidth="1.300" />
              <circle cx="8" cy="8" r="5.700" fill="#d3202f" />
              <path d="M7.500 13V5.500Q7.500 3.500 9.500 3.500T11.500 5.500 9.500 7.500H4.500" fill="none" stroke="#fff" strokeWidth=".9" />
            </Icon>
            <Title>Cozinha/Cozinha - Promob</Title>
            <Caption type="button" aria-label="Minimizar">
              <svg width="11" height="11"><path d="M0 5.500h10" stroke="#000" /></svg>
            </Caption>
            <Caption type="button" aria-label="Maximizar">
              <svg width="11" height="11"><path d="M.5.5h9v9h-9Z" fill="none" stroke="#000" /></svg>
            </Caption>
            <Caption type="button" aria-label="Fechar">
              <svg width="11" height="11"><path d="m.5.5 10 10m0-10-10 10" stroke="#000" strokeWidth="1.200" /></svg>
            </Caption>
          </TitleBar>

          <MenuRow>
            <MenuBar>
              {menus.map((m) => <MenuItem type="button" key={m}>{m}</MenuItem>)}
            </MenuBar>
            <User>
              <span>Username - Documentação</span>
              <Avatar>UD</Avatar>
            </User>
          </MenuRow>

          <ToolRow>
            <Strip $w={305}>
              <Grip />
              <Tool icon="save" label="Salvar" />
              <Divider />
              <Tool icon="sofaIn" label="Importar" />
              <Tool icon="sofaOut" label="Exportar" />
              <Tool icon="printer" label="Imprimir" />
              <Divider />
              <Tool icon="undo" label="Desfazer" />
              <Tool icon="redo" label="Refazer" />
              <Divider />
              <Tool icon="cut" label="Recortar" />
              <Tool icon="copy" label="Copiar" />
              <Tool icon="paste" label="Colar" />
              <Tool icon="hammer" label="Construir" />
              <Tool icon="roller" label="Pintar" />
              <Tool icon="del" label="Excluir" />
            </Strip>
            <Strip $w={39}>
              <Grip />
              <Tool icon="dollar" label="Orçamento" kind="menu" />
            </Strip>
            <Strip $w={190}>
              <Grip />
              <Tool icon="plan" label="Planta" kind="split" />
              <Tool icon="bricks" label="Paredes" kind="split" />
              <Tool icon="shape" label="Formas" kind="split" />
              <Tool icon="cabinetOff" label="Gabinete" kind="slim" />
              <Divider />
              <Tool icon="cursor" label="Selecionar" active />
              <ToolButton type="button" aria-label="Opções de seleção" $kind="caret"><Caret /></ToolButton>
              <Tool icon="measure" label="Medir" />
            </Strip>
            <Strip $w={88}>
              <Grip />
              <Tool icon="layers" label="Camadas" kind="split" />
              <Tool icon="door" label="Porta" />
              <Tool icon="eye3d" label="Ver 3D" />
            </Strip>
            <Strip $w={175}>
              <Grip />
              <Tool icon="eye" label="Visualizar" />
              <Divider />
              <Tool icon="boxes" label="Substituir" />
              <Tool icon="arrowL" label="Anterior" />
              <Tool icon="arrowR" label="Próximo" />
              <Divider />
              <Tool icon="cube" label="Vista" kind="split" />
              <Divider />
              <Overflow type="button" aria-label="Mais opções"><Caret /></Overflow>
            </Strip>
            <Strip $w={49}>
              <Grip />
              <Tool icon="bulb" label="Iluminação" />
              <Overflow type="button" aria-label="Mais opções"><Caret /></Overflow>
            </Strip>
            <Strip $w={33}>
              <Grip />
              <Tool icon="diamonds" label="Componentes" />
            </Strip>
            <Strip $w={39}>
              <Grip />
              <Tool icon="blocks" label="Painéis" kind="menu" />
            </Strip>
            <Strip $w={34}>
              <Grip />
              <Tool icon="person" label="Conta" />
            </Strip>
            <Strip $w={32}>
              <Grip />
              <Tool icon="chat" label="Suporte" />
            </Strip>
          </ToolRow>

          <Workspace>
            <Rail>
              <RailTab type="button" $h={87}><Icon>{icons.clip}</Icon><span>Itens Extras</span></RailTab>
              <RailTab type="button" $h={138}><Icon>{icons.gears}</Icon><span>Inserção Automática</span></RailTab>
              <RailTab type="button" $h={119}><Icon>{icons.list}</Icon><span>Lista de Módulos</span></RailTab>
              <RailTab type="button" $h={170}><Icon>{icons.queue}</Icon><span>Fila de Render - Real Sce</span></RailTab>
            </Rail>
            <Docks>
              <Band $h={23}>
                <DockTab type="button"><Icon>{icons.modules}</Icon>Módulos</DockTab>
              </Band>
              <Main>
                <Viewport>
                  <Cabinet />
                  <ViewTabs>
                    <TabGroup>
                      <TextButton type="button"><Icon>{icons.rss}</Icon>Connect</TextButton>
                      <TextButton type="button"><Icon>{icons.conexao}</Icon>Conexão P</TextButton>
                      <TextButton type="button" $on><Icon>{icons.folder}</Icon>Projeto</TextButton>
                    </TabGroup>
                    <TabGroup $grow>
                      <TextButton type="button" $on><Icon>{icons.ambient}</Icon>Ambiente 3D</TextButton>
                      <CloseTab type="button" aria-label="Fechar aba">
                        <svg width="8" height="8"><path d="m1 1 6 6m0-6L1 7" stroke="#8c8c8c" strokeWidth="1.800" /></svg>
                      </CloseTab>
                    </TabGroup>
                  </ViewTabs>
                </Viewport>

                <Panel>
                  <PanelHead>
                    <h2>Ferramentas - Seta</h2>
                    <svg width="9" height="12" aria-hidden="true"><path d="M2.500 7V1.500h4V7M5.500 1.500V7M0 7.500h9M4.500 8v4" fill="none" stroke="#000" /></svg>
                  </PanelHead>
                  <ToolList>
                    {tools.map(([icon, name]) => (
                      <li key={name}>
                        <ToolItem type="button" $on={name === "Seta"}>
                          <Icon>{icons[icon]}</Icon>
                          <span>{name}</span>
                        </ToolItem>
                        {name === "Seta" && (
                          <Pointer viewBox="646 298 80 40" aria-hidden="true">
                            <path d="M651 317.500 716 318.500M695 304Q707 316 722 318 706 321 697 332" fill="none" stroke="#fe0000" strokeWidth="6" strokeLinecap="round" strokeLinejoin="round" />
                          </Pointer>
                        )}
                      </li>
                    ))}
                  </ToolList>
                  <PropBox>
                    <Groups>
                      <Group $h={64}>
                        <legend>Movimentação</legend>
                        <label htmlFor="inc">Incremento</label>
                        <Spin id="inc" value="1" />
                      </Group>
                      <Group $h={128}>
                        <legend>Dimensão</legend>
                        <label htmlFor="larg">Largura</label>
                        <Field id="larg" disabled defaultValue="1200" />
                        <Plus>+<Spin id="extra" value="0" label="Acréscimo" /></Plus>
                        <label htmlFor="prof">Profundidade</label>
                        <Field id="prof" disabled defaultValue="385,5" />
                        <span />
                        <label htmlFor="alt">Altura</label>
                        <Field id="alt" disabled defaultValue="1028,5" />
                        <Apply type="button">Aplicar</Apply>
                      </Group>
                    </Groups>
                    <ScrollBar>
                      <svg width="8" height="6"><path d="m0 5 4-4 4 4" fill="none" stroke="#505050" strokeWidth="2" /></svg>
                      <Thumb />
                      <svg width="8" height="6"><path d="m0 1 4 4 4-4" fill="none" stroke="#505050" strokeWidth="2" /></svg>
                    </ScrollBar>
                  </PropBox>
                </Panel>
              </Main>
              <Band $h={23} $end>
                <DockTab type="button" $up><Icon>{icons.materials}</Icon>Materiais</DockTab>
              </Band>
            </Docks>
          </Workspace>

          <Status>
            <Selected>Selecionado: 1.0013.1200.Freijo -&gt; Gabinete 2 Puertas (1200x1028,5x385,5) - (Normal: 0; 0; 1 Rotação: 90)</Selected>
            <StatusActions>
              <TextButton type="button"><Icon>{icons.glasses}</Icon>Mostrar&nbsp;<Caret /></TextButton>
              <TextButton type="button" $on><Icon>{icons.collision}</Icon>Colisão</TextButton>
              <TextButton type="button" $on><Icon>{icons.junction}</Icon>Junções</TextButton>
              <TextButton type="button"><Icon>{icons.lower}</Icon>Auto Rebaixar</TextButton>
              <Tool icon="wrench" label="Configurar" kind="slim" />
              <svg width="11" height="11" aria-hidden="true"><path d="M8 0h3v3H8ZM4 4h3v3H4ZM8 4h3v3H8ZM0 8h3v3H0ZM4 8h3v3H4ZM8 8h3v3H8Z" fill="#bbb" stroke="#fafafa" /></svg>
            </StatusActions>
          </Status>
        </Window>
      </Desktop>
    </>
  );
}
